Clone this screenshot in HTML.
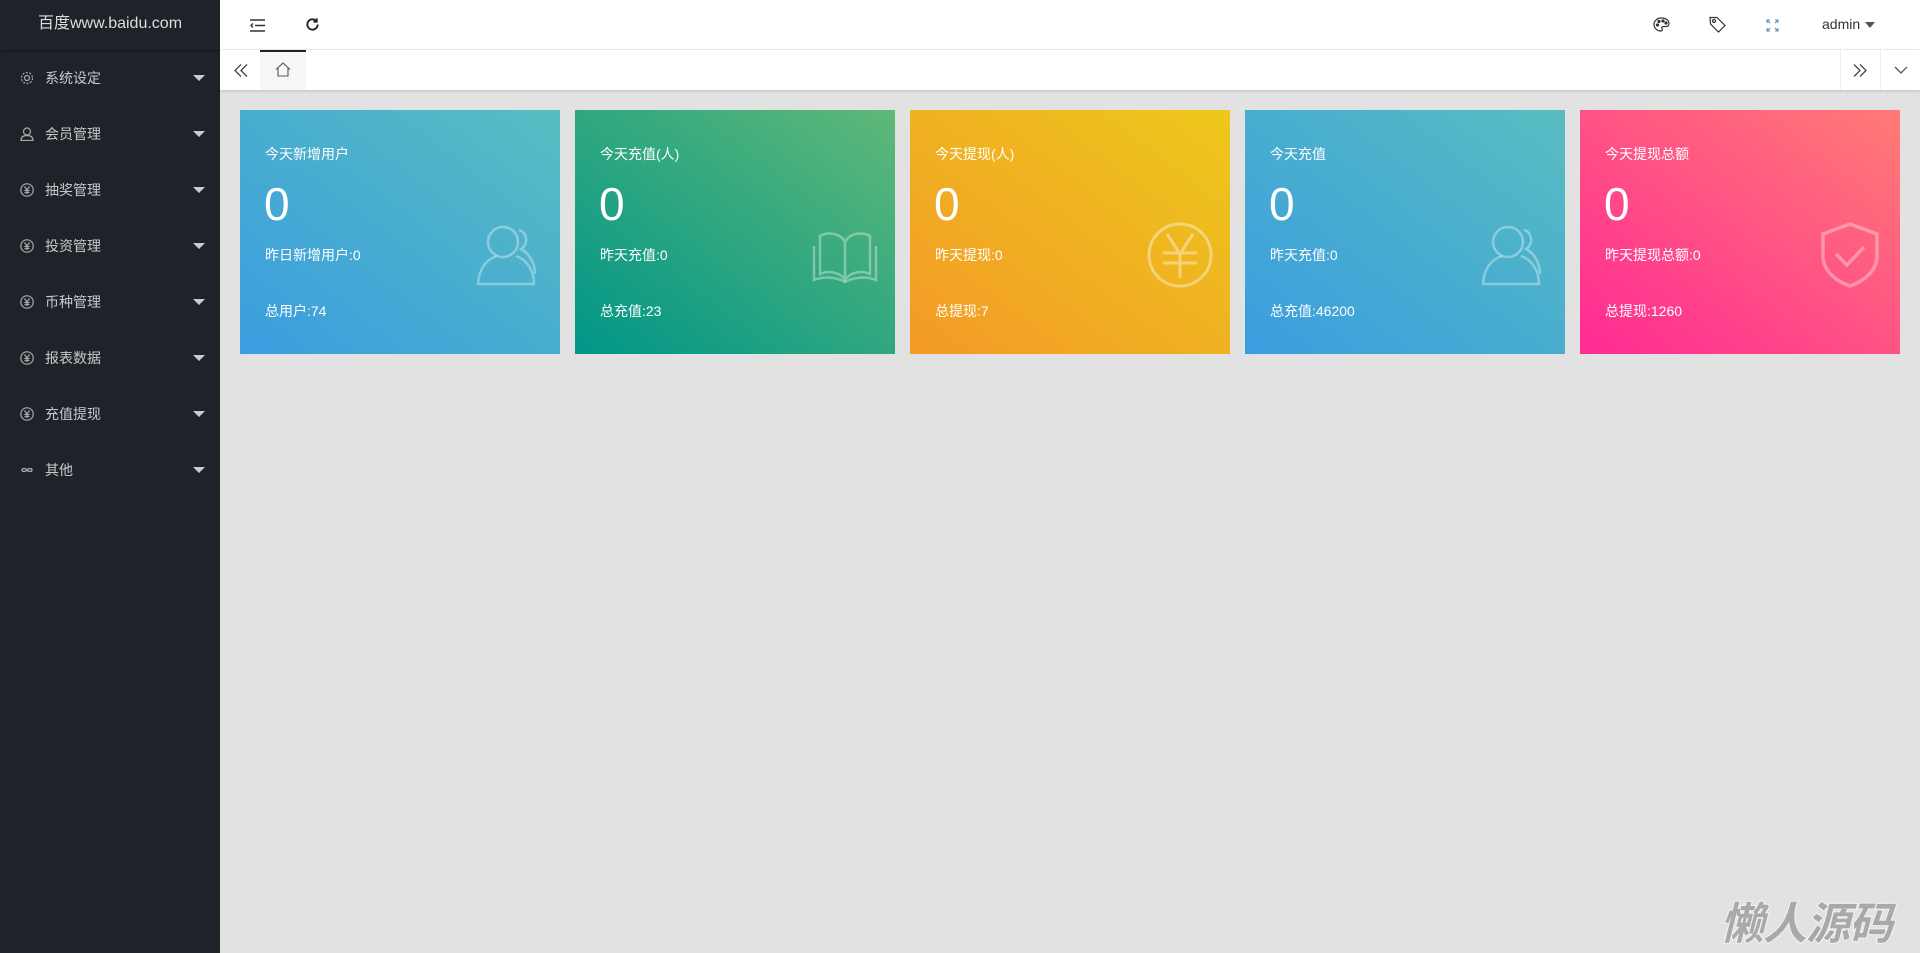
<!DOCTYPE html>
<html><head><meta charset="utf-8">
<style>
*{margin:0;padding:0;box-sizing:border-box}
body{width:1920px;height:953px;overflow:hidden;background:#e2e2e2;font-family:"Liberation Sans","Noto Sans CJK SC",sans-serif;position:relative}
.side{position:absolute;left:0;top:0;width:220px;height:953px;background:#20222a}
.logo{height:50px;line-height:48px;text-align:center;color:#ddd;font-size:16px;box-shadow:0 1px 2px rgba(0,0,0,.3)}
.mi{position:absolute;left:0;width:220px;height:56px;line-height:56px;color:rgba(255,255,255,.75);font-size:14px}
.mi .ic{position:absolute;left:20px;top:21px;width:14px;height:14px}
.mi .t{position:absolute;left:45px}
.mi .ar{position:absolute;left:193px;top:25px;width:0;height:0;border-left:6px solid transparent;border-right:6px solid transparent;border-top:6px solid #ccc}
.head{position:absolute;left:220px;top:0;right:0;height:50px;background:#fff;border-bottom:1px solid #f0f0f0}
.tabs{position:absolute;left:220px;top:50px;right:0;height:40px;background:#fff;box-shadow:0 1px 3px rgba(0,0,0,.15)}
.card{position:absolute;top:110px;width:320px;height:244px;color:#fff}
.card .a{position:absolute;left:25px;top:34px;font-size:14px}
.card .n{position:absolute;left:24px;top:64px;font-size:46px;line-height:60px}
.card .b{position:absolute;left:25px;top:135px;font-size:14px}
.card .c{position:absolute;left:25px;top:191px;font-size:14px}
.card svg{position:absolute;left:235px;top:110px;width:70px;height:70px}
.wm{position:absolute;left:1720px;top:888px;font-size:44px;font-weight:bold;font-style:italic;color:#a9a9a9;-webkit-text-stroke:2px #f2f2f2;paint-order:stroke fill;letter-spacing:-1px}
</style></head><body>
<div class="side">
<div class="logo">百度www.baidu.com</div>
<div class="mi" style="top:50px"><svg class="ic" viewBox="0 0 14 14" fill="none" stroke="#aaa" stroke-width="1.2"><circle cx="7" cy="7" r="2.5"/><circle cx="7" cy="7" r="5.5" stroke-dasharray="2 1.5"/></svg><span class="t">系统设定</span><i class="ar"></i></div>
<div class="mi" style="top:106px"><svg class="ic" viewBox="0 0 14 14" fill="none" stroke="#aaa" stroke-width="1.2"><circle cx="7" cy="4.5" r="3.5"/><path d="M1 13.5c0-4 3-5 6-5s6 1 6 5z"/></svg><span class="t">会员管理</span><i class="ar"></i></div>
<div class="mi" style="top:162px"><svg class="ic" viewBox="0 0 14 14" fill="none" stroke="#aaa" stroke-width="1.2"><circle cx="7" cy="7" r="6.2"/><path d="M4.5 3.5L7 7l2.5-3.5M4.5 7.5h5M4.5 9.5h5M7 7v4"/></svg><span class="t">抽奖管理</span><i class="ar"></i></div>
<div class="mi" style="top:218px"><svg class="ic" viewBox="0 0 14 14" fill="none" stroke="#aaa" stroke-width="1.2"><circle cx="7" cy="7" r="6.2"/><path d="M4.5 3.5L7 7l2.5-3.5M4.5 7.5h5M4.5 9.5h5M7 7v4"/></svg><span class="t">投资管理</span><i class="ar"></i></div>
<div class="mi" style="top:274px"><svg class="ic" viewBox="0 0 14 14" fill="none" stroke="#aaa" stroke-width="1.2"><circle cx="7" cy="7" r="6.2"/><path d="M4.5 3.5L7 7l2.5-3.5M4.5 7.5h5M4.5 9.5h5M7 7v4"/></svg><span class="t">币种管理</span><i class="ar"></i></div>
<div class="mi" style="top:330px"><svg class="ic" viewBox="0 0 14 14" fill="none" stroke="#aaa" stroke-width="1.2"><circle cx="7" cy="7" r="6.2"/><path d="M4.5 3.5L7 7l2.5-3.5M4.5 7.5h5M4.5 9.5h5M7 7v4"/></svg><span class="t">报表数据</span><i class="ar"></i></div>
<div class="mi" style="top:386px"><svg class="ic" viewBox="0 0 14 14" fill="none" stroke="#aaa" stroke-width="1.2"><circle cx="7" cy="7" r="6.2"/><path d="M4.5 3.5L7 7l2.5-3.5M4.5 7.5h5M4.5 9.5h5M7 7v4"/></svg><span class="t">充值提现</span><i class="ar"></i></div>
<div class="mi" style="top:442px"><svg class="ic" viewBox="0 0 14 14" fill="none" stroke="#aaa" stroke-width="1.3"><path d="M7 7c-1.5-2-5-2-5 0s3.5 2 5 0 5-2 5 0-3.5 2-5 0z"/></svg><span class="t">其他</span><i class="ar"></i></div>
</div>
<div class="head">
<svg style="position:absolute;left:30px;top:19px" width="15" height="13" viewBox="0 0 15 13" fill="none" stroke="#333" stroke-width="1.4"><path d="M0 1h15M5 6.5h10M0 12h15M3 4.5L1 6.5l2 2"/></svg>
<svg style="position:absolute;left:85px;top:17px" width="15" height="15" viewBox="0 0 16 16" fill="none" stroke="#222" stroke-width="2"><path d="M13.5 8a5.5 5.5 0 1 1-1.6-3.9"/><path d="M12.5 1.5v3.5H9" /></svg>
<svg style="position:absolute;left:1433px;top:17px" width="17" height="15" viewBox="0 0 17 15" fill="none" stroke="#333" stroke-width="1.2"><path d="M8.5 1C4 1 1 4 1 7.5S4 14 8 14c1.5 0 1.5-1.5 1-2.5s0-2 1.5-2H13c2 0 3-1 3-3C16 3.5 13 1 8.5 1z"/><circle cx="4.5" cy="8" r="1" fill="#333"/><circle cx="6" cy="4.5" r="1" fill="#333"/><circle cx="10" cy="4" r="1" fill="#333"/><circle cx="13" cy="6" r="1" fill="#333"/></svg>
<svg style="position:absolute;left:1489px;top:16px" width="17" height="17" viewBox="0 0 17 17" fill="none" stroke="#333" stroke-width="1.2"><path d="M1 1.5h7l8 8-6.5 6.5-8-8z"/><circle cx="5" cy="5" r="1.5"/></svg>
<svg style="position:absolute;left:1546px;top:19px" width="13" height="13" viewBox="0 0 13 13" fill="none" stroke="#5a8fb0" stroke-width="1.1"><path d="M1 4V1h3M1 1l3 3M12 4V1H9M12 1L9 4M1 9v3h3M1 12l3-3M12 9v3H9M12 12L9 9"/></svg>
<span style="position:absolute;left:1602px;top:16px;font-size:14px;color:#333">admin</span>
<i style="position:absolute;left:1645px;top:22px;border-left:5px solid transparent;border-right:5px solid transparent;border-top:6px solid #555"></i>
</div>
<div class="tabs">
<svg style="position:absolute;left:14px;top:14px" width="14" height="13" viewBox="0 0 14 13" fill="none" stroke="#444" stroke-width="1.3"><path d="M7 0.5L1 6.5l6 6M13 0.5l-6 6 6 6"/></svg>
<div style="position:absolute;left:40px;top:0;width:46px;height:40px;background:#f6f6f6;border-top:2px solid #20222a"></div>
<svg style="position:absolute;left:55px;top:12px" width="16" height="15" viewBox="0 0 16 15" fill="none" stroke="#555" stroke-width="1.1"><path d="M1 7.5L8 1l7 6.5M3 6v8h10V6"/></svg>
<div style="position:absolute;left:1620px;top:0;width:1px;height:40px;background:#eee"></div>
<div style="position:absolute;left:1660px;top:0;width:1px;height:40px;background:#eee"></div>
<svg style="position:absolute;left:1633px;top:14px" width="14" height="13" viewBox="0 0 14 13" fill="none" stroke="#444" stroke-width="1.3"><path d="M1 0.5l6 6-6 6M7 0.5l6 6-6 6"/></svg>
<svg style="position:absolute;left:1674px;top:16px" width="14" height="8" viewBox="0 0 14 8" fill="none" stroke="#555" stroke-width="1.3"><path d="M1 1l6 6 6-6"/></svg>
</div>

<div class="card" style="left:240px;background:linear-gradient(to top right,#3a9de0,#58bdc0)"><div class="a">今天新增用户</div><div class="n">0</div><div class="b">昨日新增用户:0</div><div class="c">总用户:74</div>
<svg viewBox="0 0 70 70" fill="none" stroke="rgba(255,255,255,.35)" stroke-width="2.5"><circle cx="28" cy="22" r="15"/><path d="M22 36C10 40 4 50 3 64h56c0-12-6-24-18-28"/><path d="M44 10c8 2 10 14 2 19 8 4 14 14 14 25"/></svg></div>
<div class="card" style="left:575px;background:linear-gradient(to top right,#009688,#5fb878)"><div class="a">今天充值(人)</div><div class="n">0</div><div class="b">昨天充值:0</div><div class="c">总充值:23</div>
<svg viewBox="0 0 70 70" fill="none" stroke="rgba(255,255,255,.35)" stroke-width="2.5"><path d="M35 60V22C30 12 16 12 10 16v38c8-4 20-2 25 6 5-8 17-10 25-6V16c-6-4-20-4-25 6"/><path d="M4 26v34c10-4 22-3 31 2 9-5 21-6 31-2V26"/></svg></div>
<div class="card" style="left:910px;background:linear-gradient(to top right,#f39a27,#edc81c)"><div class="a">今天提现(人)</div><div class="n">0</div><div class="b">昨天提现:0</div><div class="c">总提现:7</div>
<svg viewBox="0 0 70 70" fill="none" stroke="rgba(255,255,255,.4)" stroke-width="3"><circle cx="35" cy="35" r="31"/><path d="M22 14l13 20 13-20M18 33h34M18 43h34M35 34v24"/></svg></div>
<div class="card" style="left:1245px;background:linear-gradient(to top right,#3a9de0,#58bdc0)"><div class="a">今天充值</div><div class="n">0</div><div class="b">昨天充值:0</div><div class="c">总充值:46200</div>
<svg viewBox="0 0 70 70" fill="none" stroke="rgba(255,255,255,.35)" stroke-width="2.5"><circle cx="28" cy="22" r="15"/><path d="M22 36C10 40 4 50 3 64h56c0-12-6-24-18-28"/><path d="M44 10c8 2 10 14 2 19 8 4 14 14 14 25"/></svg></div>
<div class="card" style="left:1580px;background:linear-gradient(to top right,#ff2a94,#ff7b75)"><div class="a">今天提现总额</div><div class="n">0</div><div class="b">昨天提现总额:0</div><div class="c">总提现:1260</div>
<svg viewBox="0 0 70 70" fill="none" stroke="rgba(255,255,255,.35)" stroke-width="3.5"><path d="M35 4L8 14v22c0 14 12 25 27 30 15-5 27-16 27-30V14z"/><path d="M21 34l11 11 17-18"/></svg></div>

<div class="wm">懒人源码</div>
</body></html>
